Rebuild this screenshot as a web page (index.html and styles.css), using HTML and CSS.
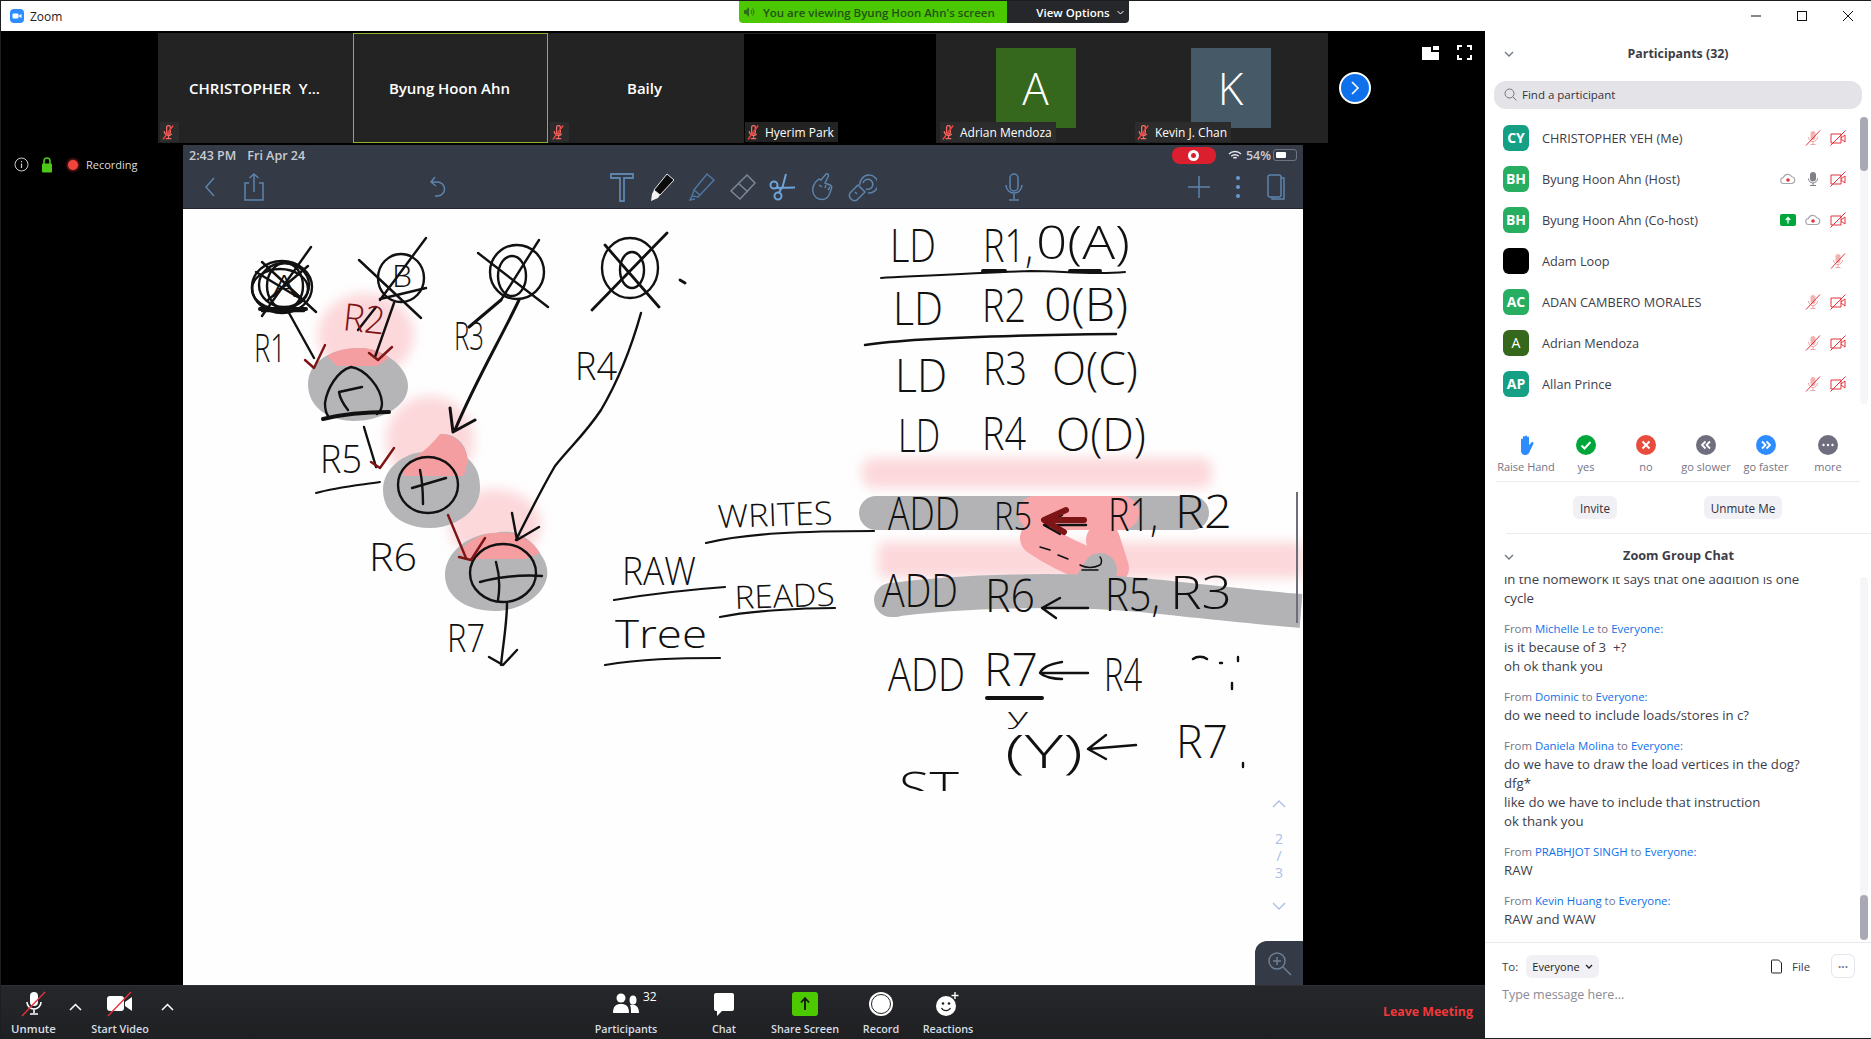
FILE: index.html
```html
<!DOCTYPE html>
<html lang="en">
<head>
    <meta charset="UTF-8">
    <title>Zoom</title>
    <link rel="stylesheet" href="styles.css">
</head>
<body>
<svg class="defs" width="0" height="0">
    <symbol id="mic-off" viewBox="0 0 16 16">
        <rect x="5.5" y="1" width="5" height="9" rx="2.5" fill="#f2b3b3"/>
        <path d="M3.5 7a4.5 4.5 0 0 0 9 0M8 11.5V14M5.5 14.5h5" fill="none" stroke="#eda5a5" stroke-width="1"/>
        <path d="M1 15.5 15 .5" stroke="#e5323b" stroke-width="1"/>
    </symbol>
    <symbol id="cam-off" viewBox="0 0 16 16">
        <path d="M1 4h10v9H1zM11 8l4-3v7l-4-3" fill="none" stroke="#e5323b" stroke-width="1"/>
        <path d="M.5 15.5 15.5 .5" stroke="#e5323b" stroke-width="1"/>
    </symbol>
    <symbol id="cloud" viewBox="0 0 16 16">
        <path d="M4 12.5a3 3 0 0 1-.5-6A4.5 4.5 0 0 1 11.8 5.8 3.4 3.4 0 0 1 12 12.5z" fill="#fff" stroke="#a5a5ad" stroke-width="1.1"/>
        <circle cx="8" cy="9" r="1.8" fill="#e5323b"/>
    </symbol>
    <symbol id="tile-mute" viewBox="0 0 14 16">
        <path d="M5 2.5a2 2 0 0 1 4 0v5a2 2 0 0 1-4 0zM2.5 6.5a4.500 4.500 0 0 0 8 3M7 12v2M4 14.5h6" fill="none" stroke="#f06a66" stroke-width="1.4"/>
        <path d="M1 15.5 12 .5" stroke="#f0413c" stroke-width="1.5"/>
    </symbol>
</svg>

<div class="window">
    <div class="titlebar">
        <svg class="app-icon" width="14" height="14" viewBox="0 0 14 14"><rect width="14" height="14" rx="4" fill="#2d8cff"/><rect x="2.5" y="4.5" width="6" height="5" rx="1" fill="#fff"/><path d="M9 6.5l2.5-1.5v4L9 7.5z" fill="#fff"/></svg>
        <span class="app-name">Zoom</span>
        <div class="win-controls">
            <svg width="12" height="12" viewBox="0 0 12 12"><path d="M1 6h10" stroke="#111"/></svg>
            <svg width="12" height="12" viewBox="0 0 12 12"><rect x="1.5" y="1.5" width="9" height="9" fill="none" stroke="#111"/></svg>
            <svg width="12" height="12" viewBox="0 0 12 12"><path d="M1 1l10 10M11 1L1 11" stroke="#111"/></svg>
        </div>
    </div>

    <div class="share-banner">
        <div class="banner-msg">
            <svg width="12" height="12" viewBox="0 0 12 12"><path d="M1 4h2l3-3v10L3 8H1z" fill="#2f6d1c"/><path d="M8 4a3 3 0 0 1 0 4M9.5 2.5a5 5 0 0 1 0 7" stroke="#2f6d1c" fill="none"/></svg>
            You are viewing Byung Hoon Ahn's screen
        </div>
        <div class="banner-opts">View Options <svg width="7" height="5" viewBox="0 0 7 5"><path d="M.5 1l3 3 3-3" stroke="#fff" fill="none"/></svg></div>
    </div>

    <div class="main">
        <div class="meeting">
            <div class="stage">
                <div class="strip-row">
                    <div class="strip">
                        <div class="tile"><span class="tile-name">CHRISTOPHER&nbsp; Y...</span><div class="tile-label"><svg width="13" height="15"><use href="#tile-mute"/></svg></div></div>
                        <div class="tile tile-active"><span class="tile-name">Byung Hoon Ahn</span></div>
                        <div class="tile"><span class="tile-name">Baily</span><div class="tile-label"><svg width="13" height="15"><use href="#tile-mute"/></svg></div></div>
                        <div class="tile tile-video"><div class="tile-label"><svg width="13" height="15"><use href="#tile-mute"/></svg>Hyerim Park</div></div>
                        <div class="tile"><div class="tile-pic pic-green">A</div><div class="tile-label"><svg width="13" height="15"><use href="#tile-mute"/></svg>Adrian Mendoza</div></div>
                        <div class="tile"><div class="tile-pic pic-slate">K</div><div class="tile-label"><svg width="13" height="15"><use href="#tile-mute"/></svg>Kevin J. Chan</div></div>
                    </div>
                    <div class="strip-next">
                        <svg width="12" height="16" viewBox="0 0 12 16"><path d="M3 2l6 6-6 6" stroke="#fff" stroke-width="1.6" fill="none"/></svg>
                    </div>
                </div>

                <div class="view-icons">
                    <svg width="17" height="14" viewBox="0 0 17 14"><path d="M0 1h9v5h8v8H0z" fill="#fff"/><rect x="11" y="0" width="6" height="4" fill="#fff"/></svg>
                    <svg width="15" height="15" viewBox="0 0 15 15"><path d="M1 5V1h4M10 1h4v4M14 10v4h-4M5 14H1v-4" fill="none" stroke="#fff" stroke-width="2"/></svg>
                </div>

                <div class="share-row">
                    <div class="meeting-info">
                        <svg width="15" height="15" viewBox="0 0 15 15"><circle cx="7.5" cy="7.5" r="6.5" fill="none" stroke="#ccc"/><path d="M7.5 6.5v4.5M7.5 4v1.2" stroke="#ccc" stroke-width="1.2"/></svg>
                        <svg class="lock" width="12" height="16" viewBox="0 0 12 16"><path d="M3 7V4a3 3 0 0 1 6 0v3" fill="none" stroke="#4fc61a" stroke-width="1.6"/><rect x="1" y="6.5" width="10" height="9" rx="1" fill="#4fc61a"/></svg>
                        <span class="rec-dot"></span>
                        <span class="rec-text">Recording</span>
                    </div>

                    <div class="screen">
                        <div class="ipad-status">
                            <span class="ipad-time">2:43 PM</span>
                            <span class="ipad-date">Fri Apr 24</span>
                            <span class="ipad-rec"><i></i></span>
                            <svg width="14" height="11" viewBox="0 0 14 11"><path d="M1 4a8.5 8.5 0 0 1 12 0M3.2 6.2a5.5 5.5 0 0 1 7.6 0M5.3 8.3a2.5 2.5 0 0 1 3.4 0" stroke="#e6e8ec" stroke-width="1.4" fill="none"/></svg>
                            <span class="ipad-batt-text">54%</span>
                            <span class="ipad-batt"><i></i></span>
                        </div>
                        <div class="ipad-toolbar">
                            <div class="tools tools-left">
                                <span class="tool"><svg width="14" height="24" viewBox="0 0 14 24"><path d="M11 3 3 12l8 9" class="ti"/></svg></span>
                                <span class="tool"><svg width="22" height="30" viewBox="0 0 22 30"><path d="M6 11H2v17h18V11h-4M11 20V2M6.5 6 11 2l4.5 4" class="ti"/></svg></span>
                            </div>
                            <div class="tools tools-undo">
                                <span class="tool"><svg width="20" height="24" viewBox="0 0 20 24"><path d="M7 2 3 7l5 4M3 7h6a7 7 0 0 1 1 14H7" class="ti"/></svg></span>
                            </div>
                            <div class="tools tools-mid">
                                <span class="tool"><svg width="24" height="30" viewBox="0 0 24 30"><path d="M1 2h22v4H14v23h-4V6H1z" class="ti ti-thick"/></svg></span>
                                <span class="tool"><svg width="28" height="30" viewBox="0 0 28 30"><path d="M19 2l7 6-14 15-6-5z" fill="#0b0b0b" stroke="#e8e8e8" stroke-width="1"/><path d="M6 18l6 5-2 3-7 3 1-7z" fill="#f3f3f3"/></svg></span>
                                <span class="tool"><svg width="28" height="30" viewBox="0 0 28 30"><path d="M19 2l7 6-14 15-6-5zM6 18l6 5-2 2-6-1zM4 24l-2 4 5-1" class="ti ti-soft"/></svg></span>
                                <span class="tool"><svg width="30" height="30" viewBox="0 0 30 30"><path d="M20 3l8 8-15 16-9-8zM11 11l10 9" class="ti ti-gray"/></svg></span>
                                <span class="tool"><svg width="30" height="30" viewBox="0 0 30 30"><path d="M19 2l-4 15M28 15.500 9 16" class="ti ti-bright"/><circle cx="7" cy="13" r="3.500" class="ti ti-bright"/><circle cx="11" cy="24" r="3.500" class="ti ti-bright"/><path d="M10 15l4 2-2 4" class="ti ti-bright"/></svg></span>
                                <span class="tool"><svg width="26" height="30" viewBox="0 0 26 30"><path d="M17 2c2-1 3 1 2 3l-3 6 5 2c2 1 2 3 1 5l-2 5c-2 4-6 5-10 4-5-2-7-7-6-12 1-3 3-6 6-8l2 1z" class="ti"/><path d="M10 13l3 2M17 13l-1 3M21 15l-2 3" class="ti"/></svg></span>
                                <span class="tool"><svg width="30" height="30" viewBox="0 0 30 30"><path d="M13 13a9 9 0 1 1 8 8M16 11a5 5 0 1 1 3 6" class="ti"/><path d="M11 13l7 7-8 8c-2 1-4 1-6-1s-2-4-1-6zM8 20l2 2" class="ti"/></svg></span>
                            </div>
                            <div class="tools tools-mic">
                                <span class="tool"><svg width="20" height="30" viewBox="0 0 20 30"><rect x="6" y="2" width="8" height="17" rx="4" class="ti"/><path d="M2 13a8 8 0 0 0 16 0M10 22v5M5 28h10" class="ti"/></svg></span>
                            </div>
                            <div class="tools tools-right">
                                <span class="tool"><svg width="24" height="24" viewBox="0 0 24 24"><path d="M12 1v22M1 12h22" class="ti"/></svg></span>
                                <span class="tool"><svg width="6" height="24" viewBox="0 0 6 24"><circle cx="3" cy="3" r="2" fill="#6b9ad0"/><circle cx="3" cy="12" r="2" fill="#6b9ad0"/><circle cx="3" cy="21" r="2" fill="#6b9ad0"/></svg></span>
                                <span class="tool"><svg width="20" height="26" viewBox="0 0 20 26"><rect x="2" y="1" width="13" height="22" rx="2" class="ti"/><path d="M15 4h3v21H6v-2" class="ti"/></svg></span>
                            </div>
                        </div>

                        <div class="page">
                            <!-- viewBox uses window coords so the strokes are easy to place -->
                            <svg class="sketch" width="1120" height="776" viewBox="183 209 1120 776">
                                <defs>
                                    <clipPath id="st-clip"><rect x="880" y="750" width="100" height="41"/></clipPath>
                                    <filter id="soft"><feGaussianBlur stdDeviation="6"/></filter>
                                </defs>

                                <!-- highlight smears -->
                                <g filter="url(#soft)" fill="#fcd8db">
                                    <ellipse cx="366" cy="335" rx="48" ry="42"/>
                                    <ellipse cx="430" cy="440" rx="44" ry="44"/>
                                    <ellipse cx="495" cy="525" rx="46" ry="36"/>
                                    <rect x="862" y="458" width="350" height="30" rx="10"/>
                                    <rect x="878" y="542" width="425" height="36" rx="6"/>
                                </g>
                                <g transform="translate(-3 0)">
                                    <path d="M311 384c0-24 26-36 52-36 25 0 48 20 48 38 0 22-30 35-54 35-26 0-46-14-46-37z" class="blob"/>
                                    <path d="M330 356c10-6 20-8 33-8 11 0 21 4 29 10l-12 8h-40z" class="blob-pink"/>
                                </g>
                                <path d="M383 490c0-22 22-38 42-38l18-18c14 0 24 12 24 24 10 8 13 18 13 30 0 24-26 40-50 40-26 0-47-14-47-38z" class="blob"/>
                                <path d="M402 470c10-12 24-18 38-36 14 0 26 10 28 26l-4 16H404z" class="blob-pink"/>
                                <path d="M445 575c0-24 26-42 50-42 14-4 34 0 46 22 6 8 7 16 6 22-4 20-28 34-52 34-28 0-50-14-50-36z" class="blob"/>
                                <path d="M458 553c12-14 24-20 38-20 14-2 32 2 44 20l-14 6h-54z" class="blob-pink"/>

                                <path d="M876 513H1192" class="smear smear-gray"/>
                                <path d="M1035 513H1122" class="smear smear-pink"/>
                                <path d="M1037 538c20 14 38 22 60 30" class="smear smear-pink"/>
                                <path d="M1103 540 1112 568" class="smear smear-pink"/>
                                <path d="M891 600c70-9 170-12 250-5 60 6 110 12 160 16" class="smear smear-gray smear-butt"/>
                                <path d="M891 600h4" class="smear smear-gray"/>
                                <path d="M1100 570 1088 590" class="smear smear-gray"/>

                                <!-- crossed-out input nodes -->
                                <g class="ink">
                                    <ellipse cx="282" cy="287" rx="30" ry="26"/>
                                    <ellipse cx="284" cy="285" rx="25" ry="22"/>
                                    <ellipse cx="280" cy="289" rx="28" ry="20"/>
                                    <ellipse cx="285" cy="286" rx="18" ry="23"/>
                                    <path d="M262 262 316 312M311 247 262 316M262 311h42M256 272l50 30M268 300l40-34"/>
                                    <path d="M260 309h46" stroke-width="4"/>
                                    <ellipse cx="401" cy="278" rx="23" ry="24"/>
                                    <path d="M359 260l62 58M426 238l-46 62M380 299l46-11"/>
                                    <ellipse cx="517" cy="272" rx="27" ry="27"/>
                                    <ellipse cx="512" cy="276" rx="14" ry="20"/>
                                    <path d="M478 253l70 54M539 240l-38 60"/>
                                    <ellipse cx="630" cy="268" rx="28" ry="30"/>
                                    <ellipse cx="632" cy="270" rx="12" ry="18"/>
                                    <path d="M605 245l54 62M667 233l-75 77M680 280l5 3" stroke-width="2.8"/>
                                </g>
                                <text x="272" y="297" class="hand hand-sm" textLength="24" lengthAdjust="spacingAndGlyphs">A</text>
                                <text x="392" y="287" class="hand hand-sm" textLength="20" lengthAdjust="spacingAndGlyphs">B</text>

                                <!-- + nodes and arrows -->
                                <g class="ink">
                                    <path d="M351 367c-14 4-24 22-26 36 0 6 1 10 3 13M351 367c14 2 30 20 31 36 0 6-2 9-5 11"/>
                                    <path d="M323 419c20-5 44-7 66-7" stroke-width="4"/>
                                    <path d="M339 392l23-5M339 392c1 7 5 13 9 18"/>
                                    <ellipse cx="428" cy="485" rx="30" ry="28"/>
                                    <path d="M412 488l34-10M420 470c3 14 3 24 3 34"/>
                                    <ellipse cx="503" cy="573" rx="33" ry="29"/>
                                    <path d="M480 582c14-4 40-8 62-6M496 562c4 14 4 26 2 38"/>

                                    <path d="M289 313l25 45M394 303l-19 54M376 307l-18 23"/>
                                    <path d="M519 300c-20 42-44 82-64 130M501 300l-32 27M450 408l3 24 22-12" stroke-width="3"/>
                                    <path d="M641 313c-14 50-30 80-40 97-16 24-30 36-46 56-14 24-26 48-39 74M512 513l5 27 22-13"/>
                                    <path d="M364 427c4 14 8 26 12 40"/>
                                    <path d="M316 493c20-6 44-8 64-11" stroke-width="2"/>
                                    <path d="M507 603c0 20-4 42-6 62M489 657l14 8 14-15"/>
                                    <path d="M881 278c40-2 110-6 150-7 30 0 60 4 94 1" stroke-width="2"/>
                                    <path d="M983 271h22M1070 271h30" stroke-width="4"/>
                                    <path d="M865 345c50-8 160-10 251-11"/>
                                    <path d="M706 543c40-10 100-12 168-12M720 617c30-6 80-9 115-9M614 600c36-6 70-10 111-13M605 665c36-6 70-7 115-7" stroke-width="2.2"/>
                                    <path d="M987 698h55" stroke-width="4"/>
                                    <path d="M1086 525h-40M1062 515l-18 10 16 9"/>
                                    <path d="M1088 608h-46M1060 598l-18 10 14 10"/>
                                    <path d="M1088 673h-46M1062 662c-12 2-20 6-22 11 4 4 14 6 22 6"/>
                                    <path d="M1136 745l-48 4M1106 735l-18 14 18 10"/>
                                    <path d="M1193 659c4-3 10-3 14 0M1220 663h2M1238 657v4M1232 683v6M1243 763v4"/>
                                </g>
                                <g class="ink ink-red">
                                    <path d="M305 360l9 8 11-23M369 353l9 7 14-13M371 462l9 6 14-20M448 515l18 43M459 557l12 3 14-22"/>
                                    <path d="M1046 520h38M1066 510l-22 10 20 12" stroke-width="6"/>
                                </g>
                                <path d="M1040 547l10 3M1058 555l10 4M1080 565c8 4 16 2 20 0 2-2 2-6 0-8M1082 570h16" class="ink ink-thin"/>

                                <!-- handwriting -->
                                <text x="254" y="362" class="hand hand-md" textLength="32" lengthAdjust="spacingAndGlyphs">R1</text>
                                <text x="342" y="330" class="hand hand-md hand-red" textLength="42" lengthAdjust="spacingAndGlyphs" transform="rotate(6 342 330)">R2</text>
                                <text x="454" y="350" class="hand hand-md" textLength="30" lengthAdjust="spacingAndGlyphs">R3</text>
                                <text x="575" y="380" class="hand hand-md" textLength="42" lengthAdjust="spacingAndGlyphs">R4</text>
                                <text x="320" y="473" class="hand hand-md" textLength="42" lengthAdjust="spacingAndGlyphs">R5</text>
                                <text x="369" y="571" class="hand hand-md" textLength="48" lengthAdjust="spacingAndGlyphs">R6</text>
                                <text x="447" y="652" class="hand hand-md" textLength="38" lengthAdjust="spacingAndGlyphs">R7</text>

                                <text x="890" y="262" class="hand" textLength="46" lengthAdjust="spacingAndGlyphs">LD</text>
                                <text x="983" y="262" class="hand" textLength="50" lengthAdjust="spacingAndGlyphs">R1,</text>
                                <text x="1036" y="259" class="hand" textLength="94" lengthAdjust="spacingAndGlyphs">0(A)</text>
                                <text x="893" y="325" class="hand" textLength="50" lengthAdjust="spacingAndGlyphs">LD</text>
                                <text x="982" y="322" class="hand" textLength="44" lengthAdjust="spacingAndGlyphs">R2</text>
                                <text x="1044" y="321" class="hand" textLength="84" lengthAdjust="spacingAndGlyphs">0(B)</text>
                                <text x="895" y="392" class="hand" textLength="52" lengthAdjust="spacingAndGlyphs">LD</text>
                                <text x="983" y="385" class="hand" textLength="44" lengthAdjust="spacingAndGlyphs">R3</text>
                                <text x="1052" y="385" class="hand" textLength="86" lengthAdjust="spacingAndGlyphs">O(C)</text>
                                <text x="898" y="452" class="hand" textLength="42" lengthAdjust="spacingAndGlyphs">LD</text>
                                <text x="982" y="450" class="hand" textLength="44" lengthAdjust="spacingAndGlyphs">R4</text>
                                <text x="1056" y="451" class="hand" textLength="90" lengthAdjust="spacingAndGlyphs">O(D)</text>

                                <text x="888" y="530" class="hand" textLength="72" lengthAdjust="spacingAndGlyphs">ADD</text>
                                <text x="994" y="530" class="hand hand-md" textLength="38" lengthAdjust="spacingAndGlyphs">R5</text>
                                <text x="1108" y="531" class="hand" textLength="50" lengthAdjust="spacingAndGlyphs">R1,</text>
                                <text x="1175" y="528" class="hand" textLength="57" lengthAdjust="spacingAndGlyphs">R2</text>
                                <text x="882" y="607" class="hand" textLength="76" lengthAdjust="spacingAndGlyphs">ADD</text>
                                <text x="985" y="612" class="hand" textLength="50" lengthAdjust="spacingAndGlyphs">R6</text>
                                <text x="1105" y="611" class="hand" textLength="55" lengthAdjust="spacingAndGlyphs">R5,</text>
                                <text x="1170" y="609" class="hand" textLength="62" lengthAdjust="spacingAndGlyphs">R3</text>
                                <text x="888" y="691" class="hand" textLength="77" lengthAdjust="spacingAndGlyphs">ADD</text>
                                <text x="984" y="686" class="hand" textLength="54" lengthAdjust="spacingAndGlyphs">R7</text>
                                <text x="1104" y="691" class="hand" textLength="38" lengthAdjust="spacingAndGlyphs">R4</text>
                                <text x="1005" y="768" class="hand" textLength="78" lengthAdjust="spacingAndGlyphs">(Y)</text>
                                <text x="1176" y="758" class="hand" textLength="52" lengthAdjust="spacingAndGlyphs">R7</text>
                                <text x="1008" y="724" class="hand hand-xs" textLength="20" lengthAdjust="spacingAndGlyphs">y</text>
                                <g clip-path="url(#st-clip)"><text x="899" y="805" class="hand" textLength="60" lengthAdjust="spacingAndGlyphs">ST</text></g>

                                <text x="718" y="528" class="hand hand-sm" textLength="115" lengthAdjust="spacingAndGlyphs" transform="rotate(-2 718 528)">WRITES</text>
                                <text x="735" y="609" class="hand hand-sm" textLength="100" lengthAdjust="spacingAndGlyphs" transform="rotate(-2 735 609)">READS</text>
                                <text x="622" y="585" class="hand hand-md" textLength="74" lengthAdjust="spacingAndGlyphs">RAW</text>
                                <text x="615" y="648" class="hand hand-md" textLength="92" lengthAdjust="spacingAndGlyphs">Tree</text>
                            </svg>
                            <div class="ipad-scroll"></div>
                            <div class="page-nav">
                                <svg width="14" height="8" viewBox="0 0 14 8"><path d="M1 7l6-6 6 6" stroke="#a9c0e8" fill="none" stroke-width="1.3"/></svg>
                                <span class="page-num">2</span><span class="page-num">/</span><span class="page-num">3</span>
                                <svg width="14" height="8" viewBox="0 0 14 8"><path d="M1 1l6 6 6-6" stroke="#a9c0e8" fill="none" stroke-width="1.3"/></svg>
                            </div>
                            <div class="zoom-tab">
                                <svg width="26" height="26" viewBox="0 0 26 26"><circle cx="10" cy="10" r="8" fill="none" stroke="#6d7f95" stroke-width="1.5"/><path d="M10 6v8M6 10h8M16 16l8 8" stroke="#6d7f95" stroke-width="1.5"/></svg>
                            </div>
                        </div>
                    </div>
                </div>
            </div>

            <div class="controls">
                <div class="ctrl ctrl-unmute">
                    <svg width="26" height="26" viewBox="0 0 26 26"><rect x="9" y="1" width="8" height="14" rx="4" fill="#fff"/><path d="M6 11a7 7 0 0 0 14 0M13 18v4M9 23h8" stroke="#fff" stroke-width="1.6" fill="none"/><path d="M1 25 24 1" stroke="#e5323b" stroke-width="1.4"/></svg>
                    <span>Unmute</span>
                </div>
                <span class="caret caret-a"><svg width="13" height="8" viewBox="0 0 13 8"><path d="M1 7l5.5-5.5L12 7" stroke="#fff" stroke-width="1.5" fill="none"/></svg></span>
                <div class="ctrl ctrl-video">
                    <svg width="26" height="26" viewBox="0 0 26 26"><rect x="0" y="5" width="17" height="15" rx="3" fill="#fff"/><path d="M18 11l7-5v14l-7-5z" fill="#fff"/><path d="M1 25 24 1" stroke="#e5323b" stroke-width="1.4"/></svg>
                    <span>Start Video</span>
                </div>
                <span class="caret caret-b"><svg width="13" height="8" viewBox="0 0 13 8"><path d="M1 7l5.5-5.5L12 7" stroke="#fff" stroke-width="1.5" fill="none"/></svg></span>
                <div class="ctrl ctrl-people">
                    <span class="ctrl-art">
                        <svg width="26" height="22" viewBox="0 0 26 22"><circle cx="8" cy="5" r="4.5" fill="#fff"/><path d="M0 20c0-7 3-9 8-9s8 2 8 9z" fill="#fff"/><ellipse cx="20" cy="7" rx="3.5" ry="4.5" fill="#fff"/><path d="M17 12c5-1 9 1 9 8h-8c0-3 0-6-1-8z" fill="#fff"/></svg>
                        <em class="people-count">32</em>
                    </span>
                    <span>Participants</span>
                </div>
                <div class="ctrl ctrl-chat">
                    <svg width="24" height="26" viewBox="0 0 24 26"><path d="M4 2h16a2 2 0 0 1 2 2v14a2 2 0 0 1-2 2H10l-5 5v-5H4a2 2 0 0 1-2-2V4a2 2 0 0 1 2-2z" fill="#fff"/></svg>
                    <span>Chat</span>
                </div>
                <div class="ctrl ctrl-share">
                    <svg width="26" height="26" viewBox="0 0 26 26"><rect y="1" width="26" height="24" rx="3" fill="#4dc900"/><path d="M13 19V8M9 11.5 13 7l4 4.5" stroke="#111" stroke-width="1.8" fill="none"/></svg>
                    <span>Share Screen</span>
                </div>
                <div class="ctrl ctrl-record">
                    <svg width="26" height="26" viewBox="0 0 26 26"><circle cx="13" cy="13" r="12" fill="#fff"/><circle cx="13" cy="13" r="9.5" fill="#fff" stroke="#26272b" stroke-width="1"/></svg>
                    <span>Record</span>
                </div>
                <div class="ctrl ctrl-react">
                    <svg width="26" height="26" viewBox="0 0 26 26"><circle cx="11" cy="15" r="10" fill="#fff"/><circle cx="8" cy="12.5" r="1.3" fill="#222"/><circle cx="14" cy="12.5" r="1.3" fill="#222"/><path d="M6.5 17c2 3.500 7 3.500 9 0" stroke="#222" stroke-width="1.3" fill="none"/><path d="M20 1v7M16.5 4.5h7" stroke="#fff" stroke-width="1.4"/></svg>
                    <span>Reactions</span>
                </div>
                <span class="leave">Leave Meeting</span>
            </div>
        </div>

        <aside class="panel">
            <div class="panel-head">
                <svg class="head-chev" width="10" height="6" viewBox="0 0 10 6"><path d="M1 1l4 4 4-4" stroke="#6e7680" stroke-width="1.3" fill="none"/></svg>
                <span>Participants (32)</span>
            </div>
            <div class="search">
                <svg width="13" height="13" viewBox="0 0 13 13"><circle cx="5.5" cy="5.5" r="4.5" fill="none" stroke="#6e7680"/><path d="M9 9l3.5 3.5" stroke="#6e7680"/></svg>
                Find a participant
            </div>
            <div class="people">
                <div class="person"><span class="av av-teal">CY</span><span class="person-name">CHRISTOPHER YEH (Me)</span><svg class="pi"><use href="#mic-off"/></svg><svg class="pi"><use href="#cam-off"/></svg></div>
                <div class="person"><span class="av av-green">BH</span><span class="person-name">Byung Hoon Ahn (Host)</span><svg class="pi"><use href="#cloud"/></svg>
                    <svg class="pi" viewBox="0 0 16 16"><rect x="5" y="1" width="6" height="9.5" rx="3" fill="#808089"/><path d="M3.5 7.5a4.5 4.5 0 0 0 9 0M8 12v2M5 14.5h6" stroke="#808089" fill="none"/></svg>
                    <svg class="pi"><use href="#cam-off"/></svg></div>
                <div class="person"><span class="av av-green">BH</span><span class="person-name">Byung Hoon Ahn (Co-host)</span>
                    <svg class="pi" viewBox="0 0 16 16"><rect y="2" width="16" height="12" rx="2" fill="#00a63a"/><path d="M8 11.5V6M5.8 8 8 5.5 10.2 8" stroke="#fff" stroke-width="1.3" fill="none"/></svg>
                    <svg class="pi"><use href="#cloud"/></svg><svg class="pi"><use href="#cam-off"/></svg></div>
                <div class="person"><span class="av av-black"></span><span class="person-name">Adam Loop</span><svg class="pi"><use href="#mic-off"/></svg></div>
                <div class="person"><span class="av av-green">AC</span><span class="person-name">ADAN CAMBERO MORALES</span><svg class="pi"><use href="#mic-off"/></svg><svg class="pi"><use href="#cam-off"/></svg></div>
                <div class="person"><span class="av av-moss">A</span><span class="person-name">Adrian Mendoza</span><svg class="pi"><use href="#mic-off"/></svg><svg class="pi"><use href="#cam-off"/></svg></div>
                <div class="person"><span class="av av-teal">AP</span><span class="person-name">Allan Prince</span><svg class="pi"><use href="#mic-off"/></svg><svg class="pi"><use href="#cam-off"/></svg></div>
                <div class="scroll-track people-track"><i class="thumb"></i></div>
            </div>

            <div class="feedback">
                <div class="fb">
                    <svg width="20" height="20" viewBox="0 0 20 20"><path d="M5 11V4.500a1 1 0 0 1 2 0V2a1 1 0 0 1 2 0V1.500a1 1 0 0 1 2 0V2.500a1 1 0 0 1 2 0V10l2.500-2.500c1-1 2.500 0 1.800 1.500L13 18c-1 1.500-2.500 2-4 2-2.500 0-4-2-4-4z" fill="#2d8cff"/></svg>
                    <span>Raise Hand</span>
                </div>
                <div class="fb">
                    <svg width="20" height="20" viewBox="0 0 20 20"><circle cx="10" cy="10" r="10" fill="#00a63a"/><path d="M5.5 10.5l3 3 6-6.500" stroke="#fff" stroke-width="2" fill="none"/></svg>
                    <span>yes</span>
                </div>
                <div class="fb">
                    <svg width="20" height="20" viewBox="0 0 20 20"><circle cx="10" cy="10" r="10" fill="#e84c3d"/><path d="M6.5 6.5l7 7M13.5 6.5l-7 7" stroke="#fff" stroke-width="2"/></svg>
                    <span>no</span>
                </div>
                <div class="fb">
                    <svg width="20" height="20" viewBox="0 0 20 20"><circle cx="10" cy="10" r="10" fill="#6e6e7e"/><path d="M9.5 6.5 6 10l3.500 3.500M14 6.500 10.500 10l3.500 3.500" stroke="#fff" stroke-width="1.8" fill="none"/></svg>
                    <span>go slower</span>
                </div>
                <div class="fb">
                    <svg width="20" height="20" viewBox="0 0 20 20"><circle cx="10" cy="10" r="10" fill="#2d8cff"/><path d="M6 6.500 9.500 10 6 13.500M10.500 6.500 14 10l-3.500 3.500" stroke="#fff" stroke-width="1.8" fill="none"/></svg>
                    <span>go faster</span>
                </div>
                <div class="fb fb-more">
                    <svg width="20" height="20" viewBox="0 0 20 20"><circle cx="10" cy="10" r="10" fill="#6e6e7e"/><circle cx="5.5" cy="10" r="1.2" fill="#fff"/><circle cx="10" cy="10" r="1.2" fill="#fff"/><circle cx="14.5" cy="10" r="1.2" fill="#fff"/></svg>
                    <span>more</span>
                </div>
            </div>

            <div class="panel-btns">
                <button class="soft-btn btn-invite">Invite</button>
                <button class="soft-btn btn-unmute">Unmute Me</button>
            </div>

            <div class="panel-head chat-head">
                <svg class="head-chev" width="10" height="6" viewBox="0 0 10 6"><path d="M1 1l4 4 4-4" stroke="#6e7680" stroke-width="1.3" fill="none"/></svg>
                <span>Zoom Group Chat</span>
            </div>

            <div class="chat">
                <div class="chat-scroll">
                    <div class="msg">
                        <p>in the homework it says that one addition is one<br>cycle</p>
                    </div>
                    <div class="msg">
                        <div class="msg-from">From <b>Michelle Le</b> to <b>Everyone:</b></div>
                        <p>is it because of 3 &nbsp;+?</p>
                        <p>oh ok thank you</p>
                    </div>
                    <div class="msg">
                        <div class="msg-from">From <b>Dominic</b> to <b>Everyone:</b></div>
                        <p>do we need to include loads/stores in c?</p>
                    </div>
                    <div class="msg">
                        <div class="msg-from">From <b>Daniela Molina</b> to <b>Everyone:</b></div>
                        <p>do we have to draw the load vertices in the dog?</p>
                        <p>dfg*</p>
                        <p>like do we have to include that instruction</p>
                        <p>ok thank you</p>
                    </div>
                    <div class="msg">
                        <div class="msg-from">From <b>PRABHJOT SINGH</b> to <b>Everyone:</b></div>
                        <p>RAW</p>
                    </div>
                    <div class="msg">
                        <div class="msg-from">From <b>Kevin Huang</b> to <b>Everyone:</b></div>
                        <p>RAW and WAW</p>
                    </div>
                </div>
                <div class="scroll-track chat-track"><i class="thumb"></i></div>
            </div>

            <div class="composer">
                <div class="to-row">
                    <span class="to-label">To:</span>
                    <span class="to-pick">Everyone <svg width="8" height="5" viewBox="0 0 8 5"><path d="M1 1l3 3 3-3" stroke="#222" stroke-width="1.3" fill="none"/></svg></span>
                    <svg class="file-icon" width="13" height="15" viewBox="0 0 13 15"><path d="M1.5 2a1 1 0 0 1 1-1h6l3 3v9a1 1 0 0 1-1 1h-8a1 1 0 0 1-1-1z" fill="none" stroke="#222"/></svg>
                    <span class="file-text">File</span>
                    <span class="more-box">···</span>
                </div>
                <div class="type-here">Type message here...</div>
            </div>
        </aside>
    </div>
</div>
</body>
</html>
```

FILE: styles.css
```css
* {
    box-sizing: border-box;
}
html, body {
    margin: 0;
    padding: 0;
    background: #000;
}
body {
    width: 1871px;
    height: 1039px;
    overflow: hidden;
    font-family: "Open Sans", "Noto Sans", sans-serif;
    color: #2f2f3a;
}
.defs {
    position: absolute;
}
.window {
    position: relative;
    width: 1871px;
    height: 1039px;
    display: flex;
    flex-direction: column;
    border-top: 1px solid #1c1f22;
    border-left: 1px solid #1c1f22;
    border-bottom: 1px solid #1c1f22;
    background: #000;
}

/* title bar */
.titlebar {
    height: 30px;
    flex: none;
    display: flex;
    align-items: center;
    padding-left: 9px;
    background: #fff;
}
.app-name {
    margin-left: 6px;
    font-size: 12px;
    color: #222;
}
.win-controls {
    margin-left: auto;
    width: 121px;
    display: flex;
    gap: 34px;
}
.share-banner {
    position: absolute;
    top: 0;
    left: 738px;
    width: 390px;
    height: 22px;
    display: flex;
    border-radius: 0 0 4px 4px;
    overflow: hidden;
    font-size: 11.5px;
    font-weight: 600;
}
.banner-msg {
    width: 268px;
    display: flex;
    align-items: center;
    gap: 8px;
    padding-left: 4px;
    background: #4bc800;
    color: #24521a;
}
.banner-opts {
    flex: 1;
    display: flex;
    align-items: center;
    justify-content: center;
    gap: 7px;
    padding-left: 24px;
    background: #25272b;
    color: #fff;
}

.main {
    flex: 1;
    display: flex;
    min-height: 0;
}
.meeting {
    width: 1484px;
    flex: none;
    display: flex;
    flex-direction: column;
}
.stage {
    position: relative;
    height: 954px;
    padding-top: 2px;
}

/* thumbnails */
.strip-row {
    display: flex;
    align-items: center;
    padding-left: 157px;
}
.strip {
    display: grid;
    grid-template-columns: repeat(6, 195px);
    height: 110px;
    background: #232323;
}
.tile {
    position: relative;
    display: flex;
    align-items: center;
    justify-content: center;
    background: #232323;
}
.tile-active {
    border: 1px solid #8ab62f;
}
.tile-video {
    margin: 1px 2px 0 1px;
    background: #000;
}
.tile-name {
    font-size: 15px;
    font-weight: 600;
    color: #fff;
    margin-top: -1px;
    margin-right: 2px;
}
.tile-pic {
    width: 80px;
    height: 80px;
    display: flex;
    align-items: center;
    justify-content: center;
    font-size: 44px;
    font-weight: 300;
    color: #fff;
}
.pic-green {
    background: #35681c;
}
.pic-slate {
    background: #455a66;
}
.tile-label {
    position: absolute;
    left: 2px;
    bottom: 1px;
    height: 20px;
    display: flex;
    align-items: center;
    gap: 5px;
    padding: 0 4px 0 2px;
    background: #2c2c2c;
    font-size: 12px;
    color: #fff;
}
.tile-video .tile-label {
    left: 1px;
    background: #232323;
}
.strip-next {
    width: 32px;
    height: 32px;
    margin-left: 11px;
    display: flex;
    align-items: center;
    justify-content: center;
    border: 2px solid #fff;
    border-radius: 50%;
    background: #0e71eb;
}
.view-icons {
    position: absolute;
    top: 14px;
    left: 1421px;
    display: flex;
    align-items: center;
    gap: 18px;
}

/* shared screen */
.share-row {
    display: flex;
    margin-top: 2px;
}
.meeting-info {
    width: 182px;
    height: 39px;
    display: flex;
    align-items: center;
    padding-left: 13px;
    font-size: 11px;
    color: #ddd;
}
.lock {
    margin-left: 12px;
}
.rec-dot {
    width: 10px;
    height: 10px;
    margin-left: 15px;
    border-radius: 50%;
    background: #f0443c;
    box-shadow: 0 0 3px 1px #8d2620;
}
.rec-text {
    margin-left: 8px;
}
.screen {
    width: 1120px;
}
.ipad-status {
    height: 20px;
    display: flex;
    align-items: center;
    padding: 0 6px 0 6px;
    background: #343a46;
    font-size: 12.5px;
    font-weight: 600;
    color: #c9ccd2;
}
.ipad-date {
    margin-left: 11px;
}
.ipad-rec {
    width: 44px;
    height: 17px;
    margin-left: auto;
    margin-right: 12px;
    display: flex;
    align-items: center;
    justify-content: center;
    border-radius: 8px;
    background: #dc1f2e;
}
.ipad-rec i {
    width: 11px;
    height: 11px;
    border-radius: 50%;
    border: 3px solid #fff;
    background: #dc1f2e;
}
.ipad-batt-text {
    margin-left: 4px;
}
.ipad-batt {
    width: 24px;
    height: 12px;
    margin-left: 2px;
    padding: 2px;
    border: 1px solid #6f7480;
    border-radius: 3px;
}
.ipad-batt i {
    display: block;
    width: 54%;
    height: 100%;
    border-radius: 1px;
    background: #fff;
}
.ipad-toolbar {
    height: 44px;
    display: flex;
    align-items: center;
    background: #343a46;
    border-bottom: 1px solid #22262e;
}
.tools {
    display: flex;
    align-items: center;
}
.tool {
    display: flex;
    justify-content: center;
    align-items: center;
    width: 40px;
}
.ti {
    fill: none;
    stroke: #5c84ad;
    stroke-width: 1.5;
}
.ti-thick {
    stroke-width: 1.8;
}
.ti-soft {
    stroke: #4d76a3;
}
.ti-gray {
    stroke: #7c8797;
}
.ti-bright {
    stroke: #6da3d8;
    stroke-width: 2;
}
.tools-left {
    margin-left: 5px;
}
.tools-left .tool {
    width: 44px;
}
.tools-undo {
    margin-left: 142px;
}
.tools-mid {
    margin-left: 144px;
}
.tools-mic {
    margin-left: 112px;
}
.tools-right {
    margin-left: 146px;
}
.tools-right .tool {
    width: 38.5px;
}

/* the whiteboard */
.page {
    position: relative;
    height: 776px;
    background: #fefefe;
    overflow: hidden;
}
.sketch {
    display: block;
}
.blob {
    fill: #b5b5b7;
}
.blob-pink {
    fill: #f59ea2;
}
.smear {
    fill: none;
    stroke-width: 34;
    stroke-linecap: round;
}
.smear-gray {
    stroke: #b3b3b5;
}
.smear-pink {
    stroke: #f8a6aa;
}
.smear-butt {
    stroke-linecap: butt;
}
.ink {
    fill: none;
    stroke: #111;
    stroke-width: 2.4;
    stroke-linecap: round;
    stroke-linejoin: round;
}
.ink-red {
    stroke: #7d1416;
}
.ink-thin {
    stroke-width: 1.5;
}
.hand {
    font-family: "Open Sans", sans-serif;
    font-size: 46px;
    font-weight: 300;
    fill: #111;
}
.hand-md {
    font-size: 38px;
}
.hand-sm {
    font-size: 32px;
}
.hand-xs {
    font-size: 22px;
}
.hand-red {
    fill: #7d1416;
}
.ipad-scroll {
    position: absolute;
    top: 283px;
    right: 5px;
    width: 2px;
    height: 131px;
    background: #6b6f77;
}
.page-nav {
    position: absolute;
    top: 591px;
    right: 17px;
    display: flex;
    flex-direction: column;
    align-items: center;
    width: 14px;
}
.page-num {
    height: 17px;
    line-height: 17px;
    font-size: 14px;
    color: #a9c0e8;
}
.page-num:nth-of-type(1) {
    margin-top: 22px;
}
.page-num:nth-of-type(3) {
    margin-bottom: 21px;
}
.zoom-tab {
    position: absolute;
    right: 0;
    bottom: 0;
    width: 48px;
    height: 44px;
    padding: 10px 0 0 12px;
    border-radius: 12px 0 0 0;
    background: #343a46;
}

/* bottom bar */
.controls {
    flex: 1;
    display: flex;
    align-items: stretch;
    background: linear-gradient(#26272b, #1f2022);
    border-top: 1px solid #2f3034;
}
.ctrl {
    display: flex;
    flex-direction: column;
    align-items: center;
    padding-top: 5px;
    font-size: 10.8px;
    font-weight: 600;
    color: #d8dde3;
    white-space: nowrap;
}
.ctrl svg {
    height: 26px;
}
.ctrl > span:last-child {
    margin-top: 3px;
    line-height: 17px;
}
.ctrl-unmute {
    width: 65px;
    font-size: 11.4px;
}
.caret {
    display: flex;
    justify-content: center;
    padding-top: 17px;
}
.caret-a {
    width: 18px;
}
.caret-b {
    width: 22px;
}
.ctrl-video {
    width: 72px;
}
.ctrl-people {
    width: 84px;
    margin-left: 406px;
}
.ctrl-art {
    position: relative;
    height: 26px;
}
.people-count {
    position: absolute;
    left: 30px;
    top: -3px;
    font-style: normal;
    font-size: 12px;
    font-weight: 400;
    color: #fff;
}
.ctrl-chat {
    width: 70px;
    margin-left: 21px;
}
.ctrl-share {
    width: 92px;
}
.ctrl-record {
    width: 60px;
}
.ctrl-react {
    width: 74px;
}
.leave {
    margin-left: auto;
    padding: 17px 12px 0 0;
    font-size: 12.4px;
    font-weight: 700;
    color: #f0393a;
}

/* right panel */
.panel {
    flex: 1;
    display: flex;
    flex-direction: column;
    background: #fff;
    min-width: 0;
}
.panel-head {
    position: relative;
    height: 50px;
    flex: none;
    display: flex;
    align-items: center;
    justify-content: center;
    padding-bottom: 6px;
    font-size: 12.4px;
    font-weight: 700;
    color: #3d3d48;
}
.head-chev {
    position: absolute;
    left: 19px;
    top: 20px;
}
.search {
    height: 28px;
    flex: none;
    margin: 0 9px;
    display: flex;
    align-items: center;
    gap: 5px;
    padding: 0 0 2px 10px;
    border-radius: 12px;
    background: #e4e4e8;
    font-size: 11.5px;
    color: #33333f;
}
.people {
    position: relative;
    height: 288px;
    flex: none;
    margin-top: 8px;
}
.person {
    height: 41px;
    display: flex;
    align-items: center;
    gap: 9px;
    padding: 0 25px 0 18px;
}
.av {
    width: 26px;
    height: 26px;
    flex: none;
    display: flex;
    align-items: center;
    justify-content: center;
    border-radius: 6px;
    font-size: 14px;
    font-weight: 700;
    color: #fff;
}
.av-teal {
    background: #15a086;
}
.av-green {
    background: #27ae60;
}
.av-black {
    background: #000;
}
.av-moss {
    background: #35681c;
    font-weight: 400;
}
.person-name {
    flex: 1;
    margin-left: 4px;
    font-size: 12.7px;
    color: #3d3d4a;
}
.pi {
    width: 16px;
    height: 16px;
    flex: none;
}
.scroll-track {
    position: absolute;
    right: 3px;
    width: 8px;
    border-radius: 4px;
    background: #f6f6f8;
}
.thumb {
    display: block;
    width: 8px;
    border-radius: 4px;
    background: #a9a9b3;
}
.people-track {
    top: 0;
    height: 287px;
}
.people-track .thumb {
    height: 54px;
}
.feedback {
    height: 77px;
    flex: none;
    margin: 0 11px;
    display: grid;
    grid-template-columns: repeat(6, 60px);
    align-content: end;
    padding-bottom: 6px;
    border-bottom: 1px solid #ededf0;
}
.fb {
    display: flex;
    flex-direction: column;
    align-items: center;
    font-size: 11px;
    color: #747487;
    white-space: nowrap;
}
.fb span {
    margin-top: 4px;
    line-height: 16px;
}
.fb-more {
    margin-left: 4px;
}
.panel-btns {
    height: 51px;
    flex: none;
    display: flex;
    align-items: center;
    padding-left: 88px;
}
.soft-btn {
    height: 23px;
    padding: 0;
    border: 0;
    border-radius: 6px;
    background: #f1f1f5;
    font-family: inherit;
    font-size: 11.7px;
    color: #2f2f3a;
}
.btn-invite {
    width: 44px;
}
.btn-unmute {
    width: 78px;
    margin-left: 87px;
}
.chat-head {
    height: 44px;
    margin-left: 21px;
    padding: 0 20px 2px 0;
    font-size: 12.7px;
    border-top: 1px solid #ededf0;
}
.chat-head .head-chev {
    left: -2px;
    top: 20px;
}
.chat {
    position: relative;
    height: 366px;
    flex: none;
    overflow: hidden;
    border-bottom: 1px solid #e8e8ee;
}
.chat-scroll {
    height: 100%;
    display: flex;
    flex-direction: column;
    justify-content: flex-end;
    gap: 12px;
    padding: 0 0 13px 19px;
}
.msg p {
    margin: 0;
    font-size: 13.2px;
    line-height: 19px;
    color: #3d3d4a;
    white-space: nowrap;
}
.msg-from {
    font-size: 11.4px;
    line-height: 18px;
    color: #747487;
}
.msg-from b {
    font-weight: 400;
    color: #0e71eb;
}
.chat-track {
    top: 0;
    bottom: 2px;
    display: flex;
    align-items: flex-end;
}
.chat-track .thumb {
    height: 45px;
}
.composer {
    flex: 1;
    padding: 11px 16px 0 17px;
}
.to-row {
    display: flex;
    align-items: center;
    height: 24px;
    font-size: 11.5px;
}
.to-label {
    width: 24px;
    color: #3d3d4a;
}
.to-pick {
    width: 73px;
    height: 23px;
    display: flex;
    align-items: center;
    justify-content: center;
    gap: 5px;
    border-radius: 6px;
    background: #f1f1f5;
    font-size: 11px;
    color: #222;
}
.file-icon {
    margin-left: 171px;
}
.file-text {
    margin-left: 9px;
    color: #3d3d4a;
}
.more-box {
    width: 24px;
    height: 24px;
    margin-left: auto;
    display: flex;
    align-items: center;
    justify-content: center;
    border: 1px solid #e4e4ed;
    border-radius: 6px;
    color: #747487;
    font-weight: 700;
}
.type-here {
    margin-top: 8px;
    font-size: 12.5px;
    color: #8b8b95;
}
```
